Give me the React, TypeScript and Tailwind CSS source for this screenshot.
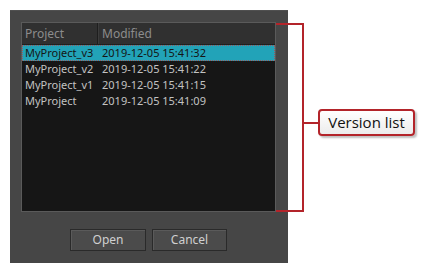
import React from "react";

const rows = [
  ["MyProject_v3", "2019-12-05 15:41:32"],
  ["MyProject_v2", "2019-12-05 15:41:22"],
  ["MyProject_v1", "2019-12-05 15:41:15"],
  ["MyProject", "2019-12-05 15:41:09"],
];

export default function App() {
  return (
    <div
      className="relative w-[430px] h-[273px] bg-white overflow-hidden"
      style={{ fontFamily: '"Noto Sans", "Liberation Sans", Arial, sans-serif' }}
    >
      <div className="absolute left-[10px] top-[10px] w-[278px] h-[253px] bg-[#464646] border-t border-[#505050] flex flex-col">
        <div className="ml-[11px] mt-[11px] w-[255px] h-[190px] bg-[#161616] border border-[#5a5a5a] flex flex-col">
          <div className="flex h-[22px] bg-[#303030] border-b border-[#202020] text-[12px] text-[#8c8c8c] leading-[22px]">
            <div className="w-[76px] pl-[3px] border-r border-[#1e1e1e] shadow-[1px_0_0_#3c3c3c]">Project</div>
            <div className="flex-1 pl-[4px]">Modified</div>
          </div>
          {rows.map((r, i) => (
            <div
              key={i}
              className={
                "flex h-[16px] text-[11px] " +
                (i === 0
                  ? "bg-[#22a3b8] text-[#151515] border border-dotted border-[#9a5a5e]"
                  : "text-[#c2c2c2] border border-transparent")
              }
            >
              <div className="w-[77px] pl-[2px] whitespace-nowrap leading-[14px]">{r[0]}</div>
              <div className="flex-1 pl-[2px] whitespace-nowrap leading-[14px]">{r[1]}</div>
            </div>
          ))}
        </div>
        <div className="flex gap-[6px] ml-[60px] mt-[17px]">
          <button className="w-[76px] h-[22px] bg-[#4b4b4b] border border-[#2a2a2a] shadow-[inset_1px_1px_0_#5a5a5a] text-[12px] text-[#d0d0d0]">
            Open
          </button>
          <button className="w-[75px] h-[22px] bg-[#4b4b4b] border border-[#2a2a2a] shadow-[inset_1px_1px_0_#5a5a5a] text-[12px] text-[#d0d0d0]">
            Cancel
          </button>
        </div>
      </div>

      {/* bracket */}
      <div className="absolute left-[276px] top-[23px] w-[28px] h-[189px] border-2 border-l-0 border-[#b3242a]" />
      <div className="absolute left-[303px] top-[122px] w-[16px] h-[2px] bg-[#b3242a]" />
      <div
        className="absolute left-[318px] top-[109px] w-[97px] h-[27px] rounded-[4px] border-2 border-[#b3242a] bg-gradient-to-b from-white to-[#ececec] shadow-[2px_2px_2px_rgba(0,0,0,0.25)] flex items-center justify-center text-[15px] text-[#111]"
        style={{ fontFamily: '"Open Sans", "Noto Sans", sans-serif' }}
      >
        Version list
      </div>
    </div>
  );
}
